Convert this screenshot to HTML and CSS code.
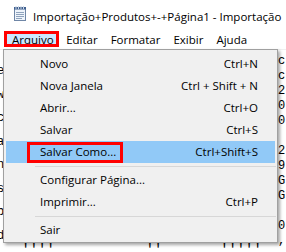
FILE: index.html
```html
<!DOCTYPE html>
<html lang="pt-BR">
<head>
<meta charset="utf-8">
<title>Bloco de Notas</title>
<link rel="stylesheet" href="styles.css">
</head>
<body>
<div class="window">
  <header class="titlebar">
    <svg class="app-icon" width="14" height="15" viewBox="0 0 14 15" aria-hidden="true">
      <rect x="1.5" y="2.5" width="11" height="12" fill="#eef4fb" stroke="#6f86a6"/>
      <rect x="1" y="1" width="12" height="2.5" fill="#3f5f8f"/>
      <g fill="#c9d5e4">
        <rect x="2.5" y="0" width="1" height="3"/>
        <rect x="5" y="0" width="1" height="3"/>
        <rect x="7.5" y="0" width="1" height="3"/>
        <rect x="10" y="0" width="1" height="3"/>
      </g>
      <path d="M3 6.5h8M3 8.5h8M3 10.5h8M3 12.5h6" stroke="#8fa3bd" fill="none"/>
    </svg>
    <span class="title">Importação+Produtos+-+Página1 - Importação</span>
  </header>
  <nav class="menubar">
    <span class="mb-item open">Arquivo</span>
    <span class="mb-item">Editar</span>
    <span class="mb-item">Formatar</span>
    <span class="mb-item">Exibir</span>
    <span class="mb-item">Ajuda</span>
  </nav>
  <main class="editor">
    <div class="col-left">
      <span>e</span><span>w</span><span>c</span><span>a</span><span>n</span><span>s</span><span>b</span><span>d</span>
    </div>
    <div class="col-mid">
      <div class="tail">  &#39;&#39;&#39;&#39;           &#39;&#39;       &#39;&#39;&#39;&#39;&#39;</div>
    </div>
    <div class="col-right">
      <span>c</span><span>c</span><span>2</span><span>0</span><span>0</span><span>&nbsp;</span><span>2</span><span>9</span><span>G</span><span>G</span><span>&nbsp;</span><span>0</span><span>,</span>
    </div>
  </main>
  <div class="dropdown">
    <div class="dd-item"><span>Novo</span><span class="key">Ctrl+N</span></div>
    <div class="dd-item"><span>Nova Janela</span><span class="key">Ctrl + Shift + N</span></div>
    <div class="dd-item"><span>Abrir...</span><span class="key">Ctrl+O</span></div>
    <div class="dd-item"><span>Salvar</span><span class="key">Ctrl+S</span></div>
    <div class="dd-item hover"><span>Salvar Como...</span><span class="key">Ctrl+Shift+S</span></div>
    <div class="sep"></div>
    <div class="dd-item"><span>Configurar Página...</span></div>
    <div class="dd-item"><span>Imprimir...</span><span class="key">Ctrl+P</span></div>
    <div class="sep"></div>
    <div class="dd-item"><span>Sair</span></div>
  </div>
</div>
</body>
</html>
```

FILE: styles.css
```css
html, body {
  margin: 0;
  background: #fff;
}

.window {
  position: relative;
  width: 286px;
  height: 252px;
  overflow: hidden;
  font-family: "Open Sans", "Noto Sans", sans-serif;
  font-size: 11.5px;
  color: #000;
  background: #fff;
}

/* title bar */
.titlebar {
  height: 30px;
  display: flex;
  align-items: flex-start;
  padding-left: 13px;
}
.app-icon {
  flex: none;
  margin-top: 6px;
}
.title {
  margin-left: 6px;
  margin-top: 9px;
  line-height: 15px;
  white-space: nowrap;
  color: #000;
}

/* menu bar */
.menubar {
  height: 19px;
  display: flex;
  padding-left: 5px;
  border-bottom: 1px solid #f0f0f0;
}
.mb-item {
  position: relative;
  padding: 0 6.5px;
  line-height: 19px;
  white-space: nowrap;
}
.mb-item.open {
  padding: 0 6px 0 7px;
  background: linear-gradient(#cce8ff, #cce8ff) 0 1px / calc(100% - 2px) 16px no-repeat;
}
.mb-item.open::after {
  content: "";
  position: absolute;
  left: -1px;
  right: 1px;
  top: 1px;
  bottom: 2px;
  border: 3px solid #f00;
}

/* editor behind the menu */
.editor {
  height: 202px;
  display: flex;
  font-family: "Liberation Mono", monospace;
}
.col-left {
  width: 3px;
  overflow: hidden;
  padding-top: 10px;
  font-size: 12px;
}
.col-left span {
  display: block;
  line-height: 23.5px;
  margin-left: -3px;
}
.col-mid {
  flex: 1;
  display: flex;
  flex-direction: column;
}
.tail {
  margin-top: auto;
  margin-bottom: -5px;
  padding-left: 2px;
  font-size: 13.8px;
  line-height: 13px;
  white-space: pre;
}
.col-right {
  width: 8px;
  overflow: hidden;
  padding-top: 4px;
  font-size: 12px;
}
.col-right span {
  display: block;
  line-height: 15px;
}

/* dropdown menu */
.dropdown {
  position: absolute;
  left: 3px;
  top: 49px;
  width: 275px;
  box-sizing: border-box;
  border: 1px solid #a0a0a0;
  background: #f0f0f0;
  padding: 3px 0 1px;
  box-shadow: 2px 2px 3px rgba(0, 0, 0, 0.35);
}
.dd-item {
  position: relative;
  display: flex;
  justify-content: space-between;
  height: 22px;
  line-height: 22px;
  margin: 0 2px;
  padding: 0 17px 0 34px;
  white-space: nowrap;
}
.dd-item.hover {
  background: #91c9f7;
}
.dd-item.hover::after {
  content: "";
  position: absolute;
  left: 21px;
  top: 1px;
  width: 96px;
  height: 21px;
  box-sizing: border-box;
  border: 3px solid #f00;
}
.sep {
  height: 1px;
  background: #d7d7d7;
  margin: 3px 1px 2px 31px;
}
```
